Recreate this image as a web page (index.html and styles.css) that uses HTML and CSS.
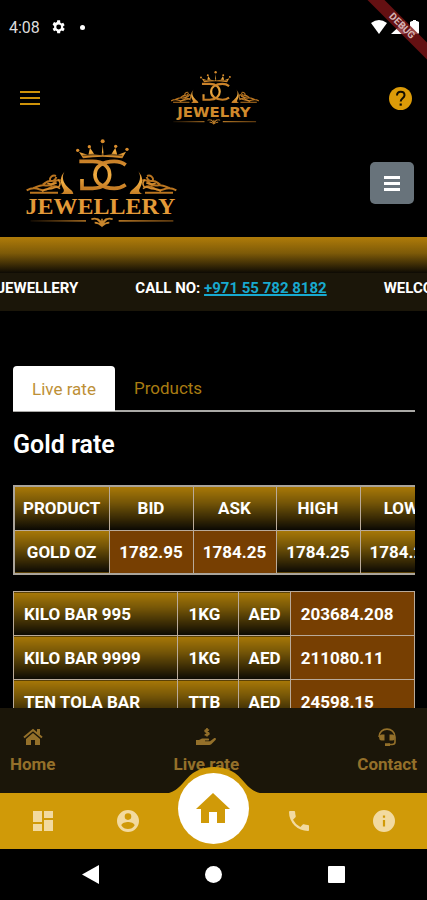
FILE: index.html
```html
<!DOCTYPE html>
<html lang="en">
<head>
<meta charset="utf-8">
<meta name="viewport" content="width=device-width, initial-scale=1">
<title>DC Jewellery</title>
<link rel="stylesheet" href="styles.css">
</head>
<body>
<svg class="defs" aria-hidden="true">
  <defs>
    <linearGradient id="gold" x1="0" y1="0" x2="0" y2="1">
      <stop offset="0" stop-color="#c98028"/><stop offset=".5" stop-color="#f2ae42"/><stop offset="1" stop-color="#c57c24"/>
    </linearGradient>
    <linearGradient id="rule"><stop offset="0" stop-color="#b5701d" stop-opacity=".1"/><stop offset=".5" stop-color="#c8862c"/><stop offset="1" stop-color="#b5701d" stop-opacity=".5"/></linearGradient>
    <g id="wing">
      <path fill="url(#gold)" d="M166 122c-9 10-9 24-3 36 5 9 13 16 20 22 4 3 6 7 7 12h-40c10-3 14-9 10-16-8-15-14-35 6-54z"/>
      <path fill="none" stroke="#b9741f" stroke-width="6" d="M50 181c14-8 26-8 38-3 10 4 20 4 30-4 8-6 20-6 28-2M70 174c12-4 20-10 32-8 12 2 22 2 30-8 6-7 14-10 20-6M98 164c8-4 12-12 24-11 10 1 14-3 17-12M120 152c-2-10 8-18 18-14M60 188h84"/>
      <path fill="none" stroke="#d58d30" stroke-width="5" d="M96 184c12-12 24-4 34-10 10-6 16-2 20 2M144 150c8 4 8 14 2 22M112 160c10 4 20 2 28-2"/>
    </g>
    <g id="emblem">
      <path fill="url(#gold)" d="M207 66l28 9 5-22 13 20 22 3 3-34 3 34 23-3 12-20 6 22 26-10-11 20q-59-9-118 0z"/>
      <path fill="#000" d="M216 75q62-10 122 0l-3 4q-58-7-115 0z" opacity=".45"/>
      <g fill="#d98c2c"><circle cx="203" cy="61" r="5"/><circle cx="238" cy="50" r="5"/><circle cx="278" cy="34" r="6"/><circle cx="317" cy="49" r="5"/><circle cx="351" cy="58" r="5"/></g>
      <g fill="none" stroke="url(#gold)" stroke-width="11">
        <path d="M208 94h40c32 0 51 17 51 40s-19 41-51 41h-32v-28"/>
        <path d="M347 105c-10-8-21-11-34-11-36 0-58 16-58 40s22 41 58 41c13 0 24-4 34-11"/>
      </g>
      <use href="#wing"/>
      <use href="#wing" transform="matrix(-1 0 0 1 549 0)"/>
    </g>
    <g id="flourish">
      <path fill="none" stroke="#c8862c" stroke-width="5" d="M244 268c14-6 22 0 32 17 10-17 18-23 32-17M254 278c10 0 16 4 22 10 6-6 12-10 22-10M276 266v20M262 266c6 4 10 8 14 14 4-6 8-10 14-14"/>
    </g>
  </defs>
</svg>
<div class="phone">
  <div class="status">
    <span class="clock">4:08</span>
    <svg class="gear" viewBox="2 2 20 20"><path fill="#fff" fill-rule="evenodd" d="M19.4 13a7.5 7.5 0 0 0 0-2l2.1-1.6-2-3.5-2.5 1a7.300 7.300 0 0 0-1.700-1L15 2.400h-4.100L10.500 5a7.300 7.300 0 0 0-1.700 1l-2.500-1-2 3.500L6.500 11a7.500 7.500 0 0 0 0 2l-2.200 1.600 2 3.500 2.500-1a7.300 7.300 0 0 0 1.700 1l.4 2.700H15l.4-2.700a7.300 7.300 0 0 0 1.700-1l2.500 1 2-3.500zM13 8.500a3.500 3.500 0 1 1 0 7 3.500 3.500 0 0 1 0-7z"/></svg>
    <i class="dot"></i>
    <span class="signals">
      <svg width="16" height="14" viewBox="0 0 16 14"><path fill="#fff" d="M0 3q8-6 16 0L8 14z"/></svg>
      <svg width="15" height="14" viewBox="0 0 15 14"><path fill="#fff" d="M0 14L14 1v13z"/></svg>
      <svg width="9" height="14" viewBox="0 0 9 14"><path fill="#fff" d="M2 1h1V0h3v1h1l2 1v11l-1 1H1l-1-1V2z"/></svg>
    </span>
    <div class="debug">DEBUG</div>
  </div>

  <header class="appbar">
    <button class="icon" aria-label="Menu"><svg width="20" height="14" viewBox="0 0 20 14"><path fill="#cf9309" d="M0 0h20v2H0zM0 6h20v2H0zM0 12h20v2H0z"/></svg></button>
    <svg class="logo-small" viewBox="33 33 258 162" role="img" aria-label="DC Jewelry">
      <use href="#emblem" transform="translate(4 17) scale(.575)"/>
      <text class="word-sans" x="159" y="169">JEWELRY</text>
      <path fill="url(#rule)" d="M39 180h92v4H39zM185 180h98v4h-98z"/>
      <use href="#flourish" transform="translate(0 24) scale(.575)"/>
    </svg>
    <button class="icon" aria-label="Help"><svg width="23" height="23" viewBox="0 0 23 23"><circle cx="11.500" cy="11.500" r="11.500" fill="#dc9b08"/><path fill="none" stroke="#120d00" stroke-width="2" d="M8 8.500C8 3.500 15.500 3.800 15.500 8.200c0 3-3.800 3.100-3.800 6.300"/><path fill="#120d00" d="M10.600 16.500h2.200v2.200h-2.200z"/></svg></button>
  </header>

  <main class="page">
    <div class="site-head">
      <svg class="logo" viewBox="42 24 459 270" role="img" aria-label="DC Jewellery">
        <use href="#emblem"/>
        <text class="word-serif" x="271" y="253">JEWELLERY</text>
        <path fill="url(#rule)" d="M62 270h166v5H62zM326 270h164v5H326z"/>
        <use href="#flourish"/>
      </svg>
      <button class="menu" aria-label="Site menu"><svg width="16" height="15" viewBox="0 0 16 15"><path fill="#fff" d="M0 0h16v3H0zM0 6h16v3H0zM0 12h16v3H0z"/></svg></button>
    </div>
    <div class="band"></div>
    <div class="ticker"><div class="track">
      <span>WELCOME TO DC JEWELLERY</span>
      <span>CALL NO: <a href="tel:+971557828182">+971 55 782 8182</a></span>
      <span>WELCOME TO DC JEWELLERY</span>
    </div></div>
    <section class="content">
      <div class="tabs" role="tablist">
        <button class="tab active" role="tab" aria-selected="true">Live rate</button>
        <button class="tab" role="tab" aria-selected="false">Products</button>
      </div>
      <h1>Gold rate</h1>
      <div class="scroller">
        <table class="rates">
          <thead><tr><th>PRODUCT</th><th>BID</th><th>ASK</th><th>HIGH</th><th>LOW</th></tr></thead>
          <tbody><tr><td>GOLD OZ</td><td class="price">1782.95</td><td class="price">1784.25</td><td>1784.25</td><td>1784.25</td></tr></tbody>
        </table>
      </div>
      <table class="bars">
        <colgroup><col class="c-name"><col class="c-unit"><col class="c-cur"><col></colgroup>
        <tbody>
          <tr><td>KILO BAR 995</td><td>1KG</td><td>AED</td><td class="price">203684.208</td></tr>
          <tr><td>KILO BAR 9999</td><td>1KG</td><td>AED</td><td class="price">211080.11</td></tr>
          <tr><td>TEN TOLA BAR</td><td>TTB</td><td>AED</td><td class="price">24598.15</td></tr>
        </tbody>
      </table>
    </section>
  </main>

  <nav class="site-nav" aria-label="Site">
    <a href="#home"><svg width="20" height="18" viewBox="0 0 20 18"><path fill="none" stroke="currentColor" stroke-width="2" d="M1 9.500L10 2l9 7.500"/><path fill="currentColor" d="M14 1h3v6l-3-2zM10 5l7 6v6h-5v-5H8v5H3v-6z"/></svg>Home</a>
    <a href="#rate"><svg width="20" height="18" viewBox="0 0 20 18"><path fill="currentColor" d="M0 12h3l3-1.500h6c1.500 0 1.500 2 0 2H9v.7h5l4-3c1.500-.8 2.600.8 1.500 1.800L15 16.500 13.500 17H0z"/><path fill="none" stroke="currentColor" stroke-width="1.600" d="M13 2.300c-2-1-4-.5-4 .8 0 1.800 4 .8 4 2.700 0 1.300-2.500 1.700-4.300.7M11 0v8.500"/></svg>Live rate</a>
    <a href="#contact"><svg width="20" height="18" viewBox="0 0 20 18"><path fill="none" stroke="currentColor" stroke-width="1.600" d="M2 9C2-1.500 18-1.500 18 9v5q0 2.500-3 2.500h-4"/><path fill="currentColor" d="M4.500 6.500h3v6h-3Q2 12 2 9.500t2.500-3zM12.500 6.500h3Q18 7 18 9.500t-2.500 3h-3zM8 15.200h5V18H8z"/></svg>Contact</a>
  </nav>

  <nav class="tabbar" aria-label="App">
    <svg class="bump" viewBox="0 0 112 28"><path fill="#d09a08" d="M0 28C13 28 18 25 25 17 34 6 42 1 56 1s22 5 31 16c7 8 12 11 25 11z"/></svg>
    <button aria-label="Dashboard"><svg width="20" height="20" viewBox="0 0 20 20"><path fill="currentColor" d="M0 0h9v11H0zM11 0h9v7h-9zM0 13h9v7H0zM11 9h9v11h-9z"/></svg></button>
    <button aria-label="Account"><svg width="22" height="22" viewBox="2 2 20 20"><path fill="currentColor" fill-rule="evenodd" d="M12 2a10 10 0 1 0 0 20 10 10 0 0 0 0-20zm0 3a3 3 0 1 1 0 6 3 3 0 0 1 0-6zm0 14.200a7.200 7.200 0 0 1-6-3.220c.03-1.990 4-3.080 6-3.080s5.970 1.090 6 3.080a7.200 7.200 0 0 1-6 3.220z"/></svg></button>
    <button class="fab" aria-label="Home"><svg width="34" height="30" viewBox="0 0 34 30"><path fill="#d09a08" d="M0 16L17 0l17 16h-5v14h-8V19h-8v11H5V16z"/></svg></button>
    <button aria-label="Call"><svg width="20" height="20" viewBox="3 3 18 18"><path fill="currentColor" d="M6.620 10.790a15.150 15.150 0 0 0 6.590 6.590l2.200-2.200c.27-.27.670-.36 1.020-.24 1.120.37 2.330.57 3.570.57.550 0 1 .45 1 1V20c0 .55-.45 1-1 1A17 17 0 0 1 3 4c0-.55.450-1 1-1h3.500c.55 0 1 .45 1 1 0 1.250.2 2.450.57 3.570.11.350.03.740-.25 1.020z"/></svg></button>
    <button aria-label="Information"><svg width="22" height="22" viewBox="2 2 20 20"><path fill="currentColor" fill-rule="evenodd" d="M12 2a10 10 0 1 0 0 20 10 10 0 0 0 0-20zm1 15h-2v-6h2zm0-8h-2V7h2z"/></svg></button>
  </nav>

  <div class="sysnav">
    <button aria-label="Back"><svg width="17" height="19" viewBox="0 0 17 19"><path fill="#fff" d="M17 0v19L0 9.500z"/></svg></button>
    <button aria-label="Home screen"><svg width="17" height="17" viewBox="0 0 17 17"><circle cx="8.500" cy="8.500" r="8.500" fill="#fff"/></svg></button>
    <button aria-label="Recent apps"><svg width="17" height="17" viewBox="0 0 17 17"><rect width="17" height="17" rx="1" fill="#fff"/></svg></button>
  </div>
</div>
</body>
</html>
```
FILE: styles.css
```css
* { box-sizing: border-box; }
body { margin: 0; background: #000; color: #fff; font-family: Roboto, "Liberation Sans", sans-serif; font-size: 17px; }
button { margin: 0; padding: 0; border: 0; background: none; color: inherit; font: inherit; }
svg { display: block; }
.defs { position: absolute; width: 0; height: 0; }
.phone { display: flex; flex-direction: column; height: 100vh; overflow: hidden; position: relative; }

.status { display: flex; align-items: center; height: 58px; padding: 0 8px 4px 9px; flex: none; }
.clock { color: #ddd; font-size: 16px; }
.gear { width: 14px; height: 14px; margin-left: 11px; }
.dot { width: 5px; height: 5px; margin-left: 15px; border-radius: 50%; background: #fff; }
.signals { display: flex; gap: 4px; margin-left: auto; }
.debug { position: absolute; top: 20px; right: -35px; width: 120px; height: 12px; line-height: 12px; font-size: 10px; font-weight: 700; text-align: center; color: #d5b5b5; background: rgba(125, 20, 22, .8); transform: rotate(45deg); }

.appbar { display: flex; align-items: center; justify-content: space-between; height: 80px; padding: 0 15px 0 20px; flex: none; }
.logo-small { width: 88px; height: 55px; }
.word-sans { font: 700 44px "DejaVu Sans", sans-serif; text-anchor: middle; fill: #d08a2c; }
.word-serif { font: 700 72px "Liberation Serif", serif; text-anchor: middle; fill: #e39a38; }

.page { flex: 1; min-height: 0; overflow: hidden; }
.site-head { display: flex; align-items: center; justify-content: space-between; padding: 0 13px 9px 24px; }
.logo { width: 153px; height: 90px; }
.menu { display: grid; place-items: center; width: 44px; height: 42px; border-radius: 5px; background: #68737b; }
.band { height: 36px; background: linear-gradient(#b07c0a, #7d5a08 45%, #0d0a04); }
.ticker { height: 38px; padding-top: 5px; overflow: hidden; background: #1b1609; font-size: 15px; font-weight: 700; line-height: 20px; }
.track { display: flex; gap: 57px; width: max-content; margin-left: -124px; white-space: nowrap; }
.ticker a { color: #18a9cf; text-decoration-thickness: 2px; }

.content { padding: 55px 12px 0 13px; }
.tabs { display: flex; border-bottom: 2px solid #aaa9a6; }
.tab { height: 44px; padding: 0 19px; color: #a97c12; }
.tab.active { margin-bottom: -1px; height: 45px; border-radius: 4px 4px 0 0; background: #fff; color: #bd9037; }
h1 { margin: 17px 0 24px; font-size: 25px; font-weight: 600; line-height: 32px; }

.scroller { overflow: hidden; margin-bottom: 16px; }
table { border-collapse: collapse; font-weight: 700; white-space: nowrap; }
th, td { height: 44px; padding: 0 9px; border: 1px solid #b9aa99; background: linear-gradient(#a87807, #775707 35%, #0b0903); }
.rates { text-align: center; border: 2px solid #aaa49b; }
.rates th, .rates td { padding: 0 10px 0 9px; }
.rates th:first-child, .rates td:first-child { padding: 0 9px 0 8px; }
.bars { width: 100%; table-layout: fixed; text-align: left; }
.bars td { padding-left: 10px; }
.c-name { width: 41%; }
.c-unit { width: 15%; }
.c-cur { width: 13%; }
td.price { background: #773f02; }

.site-nav { display: flex; justify-content: space-between; height: 85px; padding: 20px 10px 0; flex: none; background: #1b1609; }
.site-nav a { display: flex; flex-direction: column; align-items: center; gap: 8px; color: #94702a; font-weight: 700; line-height: 20px; text-decoration: none; }

.tabbar { position: relative; display: grid; grid-template-columns: repeat(5, 1fr); place-items: center; height: 56px; flex: none; background: #d09a08; color: #f2daa0; }
.bump { position: absolute; left: 50%; top: -27px; width: 112px; height: 28px; transform: translateX(-50%); }
.fab { position: relative; display: grid; place-items: center; width: 71px; height: 71px; margin-top: -26px; border-radius: 50%; background: #fff; }
.sysnav { display: flex; align-items: center; justify-content: space-between; height: 51px; padding: 0 82px; flex: none; }
```
